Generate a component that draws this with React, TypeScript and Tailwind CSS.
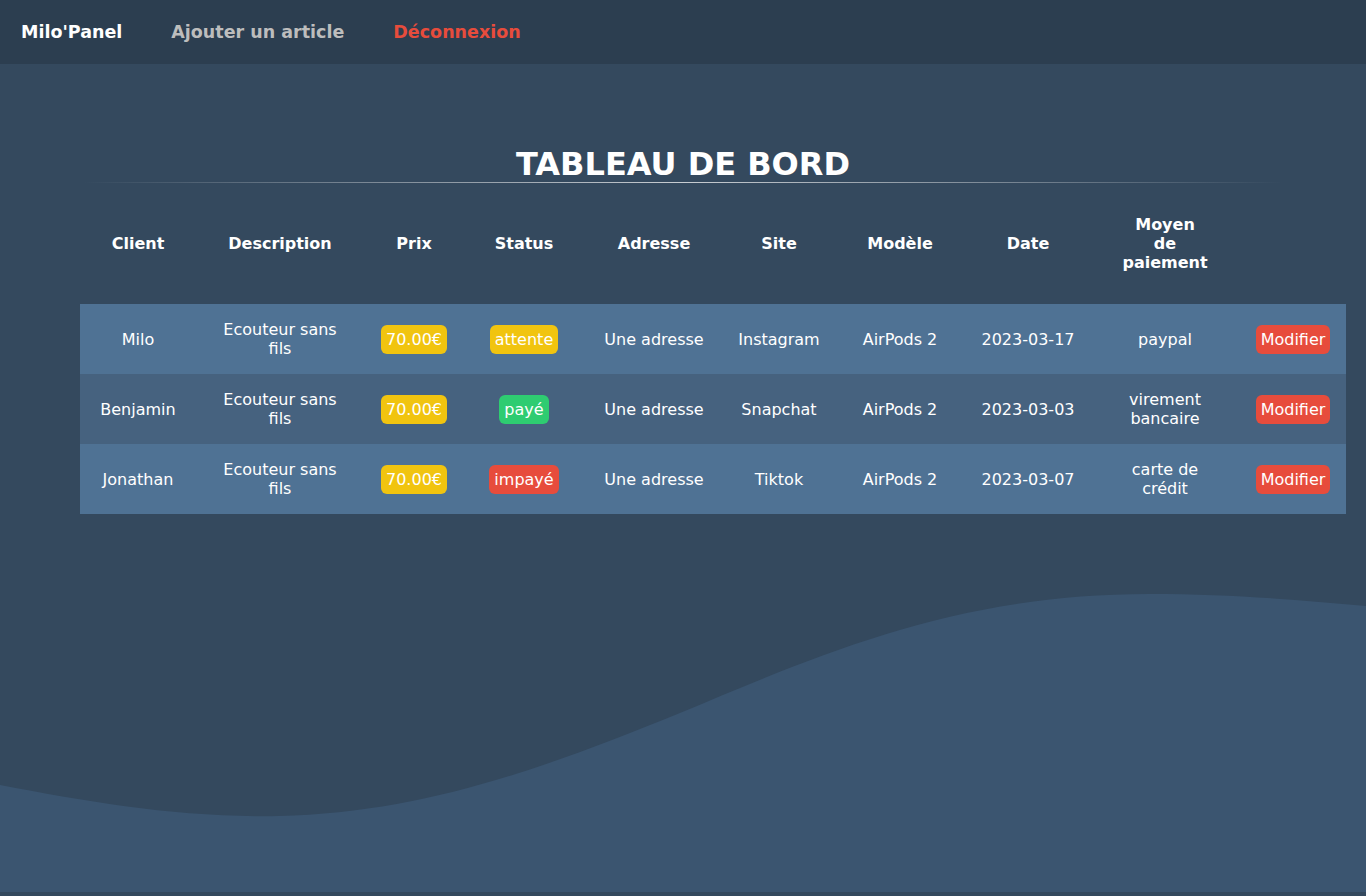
import React from "react";

type Order = {
  client: string;
  description: string;
  price: string;
  status: "attente" | "payé" | "impayé";
  address: string;
  site: string;
  model: string;
  date: string;
  payment: string;
};

const orders: Order[] = [
  {
    client: "Milo",
    description: "Ecouteur sans fils",
    price: "70.00€",
    status: "attente",
    address: "Une adresse",
    site: "Instagram",
    model: "AirPods 2",
    date: "2023-03-17",
    payment: "paypal",
  },
  {
    client: "Benjamin",
    description: "Ecouteur sans fils",
    price: "70.00€",
    status: "payé",
    address: "Une adresse",
    site: "Snapchat",
    model: "AirPods 2",
    date: "2023-03-03",
    payment: "virement bancaire",
  },
  {
    client: "Jonathan",
    description: "Ecouteur sans fils",
    price: "70.00€",
    status: "impayé",
    address: "Une adresse",
    site: "Tiktok",
    model: "AirPods 2",
    date: "2023-03-07",
    payment: "carte de crédit",
  },
];

const statusColor = {
  attente: "bg-[#f1c40f]",
  payé: "bg-[#2ecc71]",
  impayé: "bg-[#e74c3c]",
};

const headers = [
  "Client",
  "Description",
  "Prix",
  "Status",
  "Adresse",
  "Site",
  "Modèle",
  "Date",
  "Moyen de paiement",
  "",
];

const colWidths = [
  "w-[116px]",
  "w-[168px]",
  "w-[100px]",
  "w-[120px]",
  "w-[140px]",
  "w-[110px]",
  "w-[132px]",
  "w-[124px]",
  "w-[150px]",
  "w-[106px]",
];

const Badge = ({ color, children }: { color: string; children: React.ReactNode }) => (
  <span className={`${color} inline-block rounded-[6px] px-[5px] py-[5px] leading-[19px] text-white`}>
    {children}
  </span>
);

const App = () => {
  return (
    <div
      className="min-h-[896px] flex flex-col bg-[#34495e] text-white"
      style={{ fontFamily: '"DejaVu Sans", Verdana, sans-serif' }}
    >
      <nav className="h-16 bg-[#2c3e50] flex items-center px-[21px] gap-[49px] font-bold text-[17.5px]">
        <a href="#" className="text-white">
          Milo'Panel
        </a>
        <a href="#" className="text-[#bdbdbd]">
          Ajouter un article
        </a>
        <a href="#" className="text-[#e74c3c]">
          Déconnexion
        </a>
      </nav>

      <main className="pt-[82px]">
        <h1 className="text-center text-[32px] font-bold leading-[36px]">TABLEAU DE BORD</h1>
        <div className="mx-auto h-px w-[1200px] bg-gradient-to-r from-transparent via-[#c8cdd2] to-transparent" />

        <table className="ml-[80px] mt-[7px] w-[1266px] table-fixed border-collapse text-center text-base">
          <colgroup>
            {colWidths.map((w, i) => (
              <col key={i} className={w} />
            ))}
          </colgroup>
          <thead>
            <tr className="h-[114px]">
              {headers.map((h, i) => (
                <th key={i} className="align-middle font-bold leading-[19px] px-0 pb-[7px]">
                  <div className={i === 8 ? "mx-auto max-w-[86px]" : ""}>{h}</div>
                </th>
              ))}
            </tr>
          </thead>
          <tbody>
            {orders.map((o, idx) => (
              <tr
                key={o.client}
                className={`h-[70px] ${idx % 2 === 0 ? "bg-[#4f7294]" : "bg-[#46627f]"}`}
              >
                <td className="align-middle leading-[19px]">{o.client}</td>
                <td className="align-middle leading-[19px] px-[20px]">{o.description}</td>
                <td className="align-middle">
                  <Badge color="bg-[#f1c40f]">{o.price}</Badge>
                </td>
                <td className="align-middle">
                  <Badge color={statusColor[o.status]}>{o.status}</Badge>
                </td>
                <td className="align-middle leading-[19px]">{o.address}</td>
                <td className="align-middle leading-[19px]">{o.site}</td>
                <td className="align-middle leading-[19px]">{o.model}</td>
                <td className="align-middle leading-[19px]">{o.date}</td>
                <td className="align-middle leading-[19px]">
                  <div className="mx-auto max-w-[86px]">{o.payment}</div>
                </td>
                <td className="align-middle">
                  <Badge color="bg-[#e74c3c]">Modifier</Badge>
                </td>
              </tr>
            ))}
          </tbody>
        </table>
      </main>

      <div className="mt-auto">
        <svg viewBox="0 0 1366 312" className="block w-full h-[312px]" preserveAspectRatio="none">
          <path
            d="M0 205 C 90 222 180 238 279 236 C 420 233 540 190 680 133 C 830 70 960 14 1150 14 C 1230 14 1300 20 1366 26 L1366 312 L0 312 Z"
            fill="#3b5570"
          />
        </svg>
        <div className="h-[4px]" />
      </div>
    </div>
  );
};

export default App;
